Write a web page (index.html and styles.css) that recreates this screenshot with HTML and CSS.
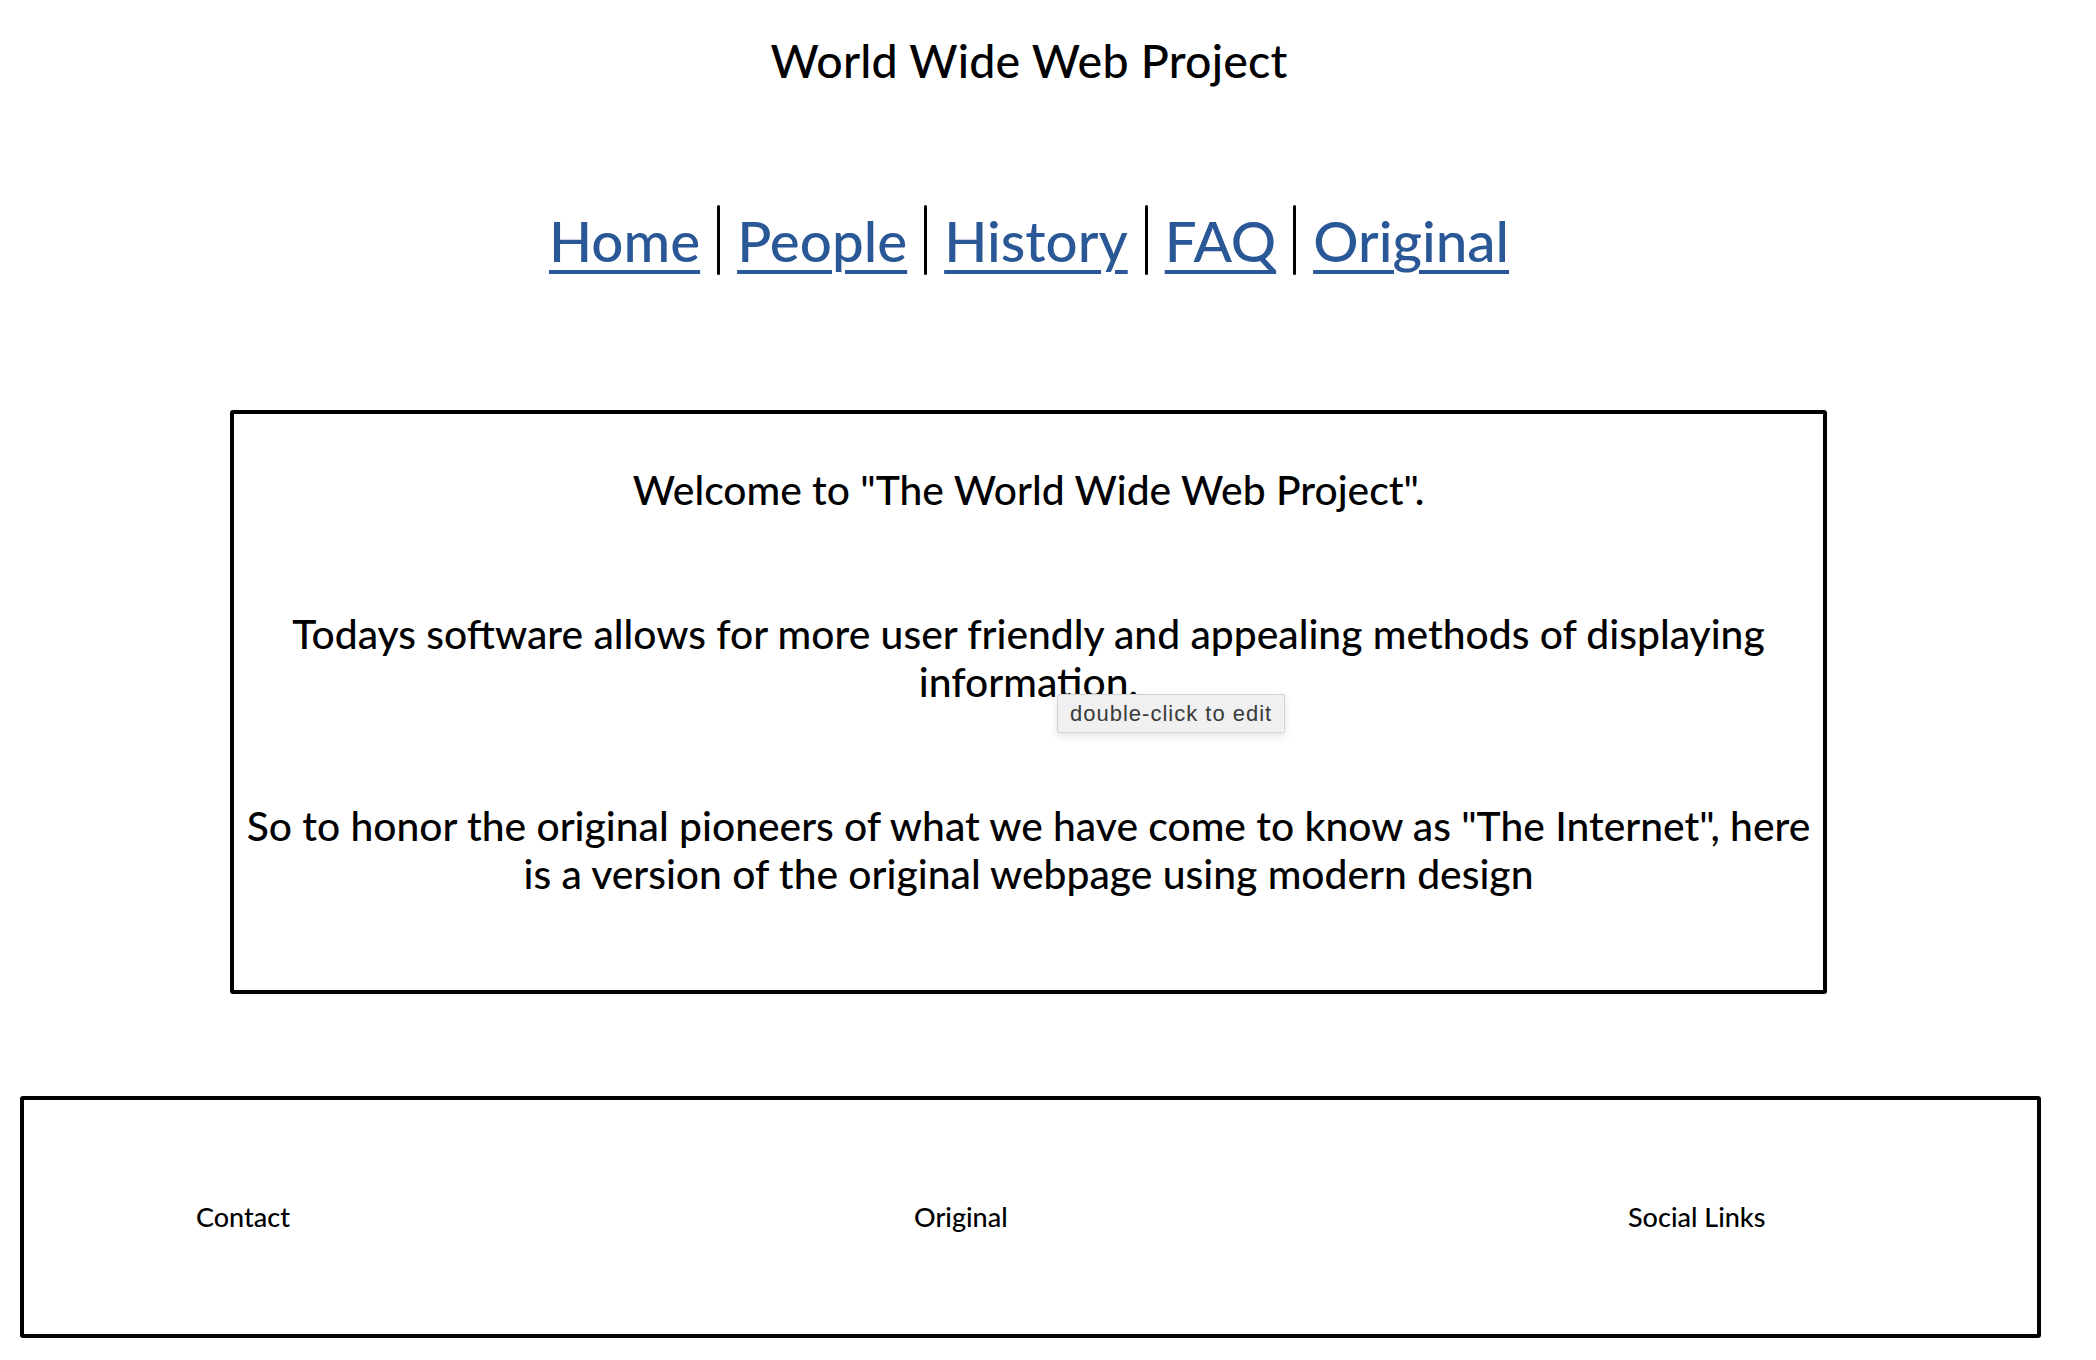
FILE: index.html
```html
<!DOCTYPE html>
<html lang="en">
<head>
<meta charset="utf-8">
<title>World Wide Web Project</title>
<link rel="stylesheet" href="styles.css">
</head>
<body>
<header class="site-header">
  <h1 class="site-title">World Wide Web Project</h1>
  <nav class="main-nav">
    <a class="nav-link" href="#">Home</a>
    <span class="nav-sep"></span>
    <a class="nav-link" href="#">People</a>
    <span class="nav-sep"></span>
    <a class="nav-link" href="#">History</a>
    <span class="nav-sep"></span>
    <a class="nav-link" href="#">FAQ</a>
    <span class="nav-sep"></span>
    <a class="nav-link" href="#">Original</a>
  </nav>
</header>
<main class="content-box">
  <p class="content-line">Welcome to "The World Wide Web Project".</p>
  <p class="content-line">Todays software allows for more user friendly and appealing methods of displaying<br>information.</p>
  <p class="content-line">So to honor the original pioneers of what we have come to know as "The Internet", here<br>is a version of the original webpage using modern design</p>
  <div class="tooltip">double-click to edit</div>
</main>
<footer class="site-footer">
  <div class="footer-item">Contact</div>
  <div class="footer-item">Original</div>
  <div class="footer-item">Social Links</div>
</footer>
</body>
</html>
```
FILE: styles.css
```css
html, body {
  margin: 0;
  padding: 0;
  background: #ffffff;
}
body {
  font-family: "Lato", "Open Sans", sans-serif;
  color: #000;
  width: 2096px;
  height: 1360px;
  overflow: hidden;
}
.site-header {
  display: flex;
  flex-direction: column;
  align-items: center;
}
.site-title {
  margin: 35px 38px 0 0;
  font-size: 46.5px;
  line-height: 50px;
  font-weight: 500;
  letter-spacing: 0.2px;
}
.main-nav {
  margin: 120px 38px 0 0;
  display: flex;
  align-items: center;
  gap: 17px;
  height: 70px;
}
.nav-link {
  color: #2a5795;
  font-size: 56.5px;
  line-height: 70px;
  font-weight: 500;
  text-decoration: underline;
  text-decoration-thickness: 4px;
  text-underline-offset: 8px;
}
.nav-sep {
  display: block;
  width: 3px;
  height: 70px;
  background: #000;
  border-radius: 2px;
}
.content-box {
  position: relative;
  box-sizing: border-box;
  margin: 135px 0 0 230px;
  width: 1597px;
  height: 584px;
  border: 4px solid #000;
  border-radius: 3px;
  padding: 52px 7px 0 7px;
  display: flex;
  flex-direction: column;
  gap: 96px;
}
.content-line {
  margin: 0;
  text-align: center;
  font-size: 40.8px;
  line-height: 48px;
  font-weight: 500;
}
.tooltip {
  position: absolute;
  left: 823px;
  top: 280px;
  padding: 0 12px;
  height: 37px;
  line-height: 37px;
  background: #f0f0f0;
  border: 1px solid #d4d4d4;
  border-radius: 2px;
  box-shadow: 0 3px 8px rgba(0,0,0,0.12);
  font-family: "Liberation Sans", "Open Sans", sans-serif;
  font-size: 22px;
  color: #3a3a3a;
  letter-spacing: 1px;
}
.site-footer {
  box-sizing: border-box;
  margin: 102px 0 0 20px;
  width: 2021px;
  height: 242px;
  border: 4px solid #000;
  border-radius: 3px;
  padding-left: 172px;
  display: grid;
  grid-template-columns: 718px 714px auto;
  align-items: center;
}
.footer-item {
  font-size: 27px;
  line-height: 30px;
  font-weight: 500;
}
```
